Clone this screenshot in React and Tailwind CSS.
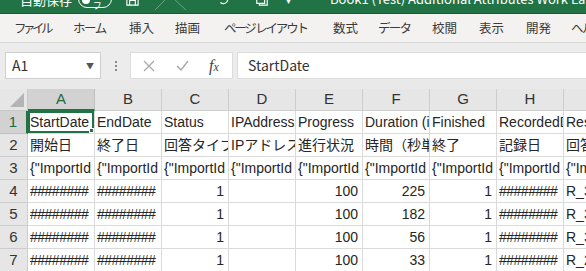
import React from "react";

// ribbon tabs: width of the slot and letter spacing to mimic the proportional UI font
const tabs = [
  { label: "ファイル", w: "w-[59px]", tr: "tracking-[-3.5px]" },
  { label: "ホーム", w: "w-[56px]", tr: "tracking-[-1.5px]" },
  { label: "挿入", w: "w-[46px]", tr: "" },
  { label: "描画", w: "w-[49px]", tr: "" },
  { label: "ページ レイアウト", w: "w-[109px]", tr: "tracking-[-2.2px]" },
  { label: "数式", w: "w-[45px]", tr: "" },
  { label: "データ", w: "w-[54px]", tr: "tracking-[-1.8px]" },
  { label: "校閲", w: "w-[47px]", tr: "" },
  { label: "表示", w: "w-[47px]", tr: "" },
  { label: "開発", w: "w-[45px]", tr: "" },
  { label: "ヘルプ", w: "w-[50px]", tr: "tracking-[-1.5px]" },
];
const cols = ["A", "B", "C", "D", "E", "F", "G", "H", "I"];

const hash = "########";
const imp = '{"ImportId';

const rows = [
  ["StartDate", "EndDate", "Status", "IPAddress", "Progress", "Duration (in seconds)", "Finished", "RecordedDate", "ResponseId"],
  ["開始日", "終了日", "回答タイプ", "IPアドレス", "進行状況", "時間（秒単位）", "終了", "記録日", "回答ID"],
  [imp, imp, imp, imp, imp, imp, imp, imp, imp],
  [hash, hash, "1", "", "100", "225", "1", hash, "R_3xQ"],
  [hash, hash, "1", "", "100", "182", "1", hash, "R_3aB"],
  [hash, hash, "1", "", "100", "56", "1", hash, "R_3kL"],
  [hash, hash, "1", "", "100", "33", "1", hash, "R_2pM"],
];

const isNum = (v) => /^\d+$/.test(v);

export default function App() {
  return (
    <div className="w-[586px] h-[271px] overflow-hidden bg-[#e9e9e9] font-['Noto_Sans_CJK_JP',sans-serif] text-[#262626]">
      {/* title bar, cut off at the top */}
      <div className="h-[14px] bg-[#217346] border-b border-[#195a36] flex items-end overflow-hidden text-white">
        <div className="w-[330px] h-[28px] shrink-0 flex items-center pl-[20px]">
          <span className="text-[13px] leading-none">自動保存</span>
          <span className="ml-[6px] w-[34px] h-[18px] shrink-0 rounded-full border border-white flex items-center px-[3px] text-[9px]">
            <span className="w-[9px] h-[9px] rounded-full bg-white" />
            <span className="ml-[3px]">オフ</span>
          </span>
          <svg className="ml-[13px] shrink-0" width="15" height="15" viewBox="0 0 16 16" fill="none" stroke="white" strokeWidth="1.2">
            <path d="M2 2h10l2 2v10H2z" />
            <path d="M5 2v4h6V2M5 14v-5h6v5" />
          </svg>
          <svg className="ml-[14px] shrink-0" width="34" height="24" viewBox="0 0 34 24" fill="none" stroke="#6a9e80" strokeWidth="1">
            <path d="M1 23L12 12M20 12l12 11" />
          </svg>
          <svg className="ml-[28px] shrink-0" width="14" height="14" viewBox="0 0 16 16" fill="none" stroke="white" strokeWidth="1.3">
            <path d="M4 6a5 5 0 1 1 1 6" />
            <path d="M3 3v4h4" />
          </svg>
          <svg className="ml-[24px] shrink-0" width="16" height="14" viewBox="0 0 16 16" fill="none" stroke="white" strokeWidth="1.3">
            <path d="M2 4h9v9H2zM11 7h3v8H5v-2" />
          </svg>
          <span className="ml-[16px] text-[10px]">▾</span>
        </div>
        <div className="h-[28px] shrink-0 flex items-center">
          <span className="text-[13px] whitespace-nowrap">Book1 (Test) Additional Attributes Work Label Data</span>
        </div>
      </div>

      {/* ribbon tabs */}
      <div className="h-[29px] bg-[#f3f2f1] border-b border-[#d6d6d6] flex items-center pl-[14px] whitespace-nowrap">
        {tabs.map((t) => (
          <span key={t.label} className={`${t.w} ${t.tr} shrink-0 text-[12.5px] text-[#3b3b3b]`}>
            {t.label}
          </span>
        ))}
      </div>

      {/* formula bar */}
      <div className="h-[37px] bg-[#ececec] flex items-end pb-[1px] pl-[5px]">
        <div className="w-[96px] h-[27px] bg-white border border-[#cfcfcf] flex items-center justify-between pl-[6px] pr-[6px]">
          <span className="text-[14px] text-[#333]">A1</span>
          <span className="text-[8px] text-[#555]">▼</span>
        </div>
        <div className="w-[29px] h-[27px] flex flex-col items-center justify-center gap-[2px]">
          <span className="w-[2px] h-[2px] bg-[#8a8a8a]" />
          <span className="w-[2px] h-[2px] bg-[#8a8a8a]" />
          <span className="w-[2px] h-[2px] bg-[#8a8a8a]" />
        </div>
        <div className="w-[103px] h-[27px] bg-white border border-[#dcdcdc] flex items-center">
          <svg className="ml-[12px]" width="12" height="12" viewBox="0 0 12 12" stroke="#a8a8a8" strokeWidth="1.2">
            <path d="M1 1l10 10M11 1L1 11" />
          </svg>
          <svg className="ml-[21px]" width="13" height="11" viewBox="0 0 13 11" fill="none" stroke="#a8a8a8" strokeWidth="1.4">
            <path d="M1 6l4 4 7-9" />
          </svg>
          <span className="ml-[20px] font-['Liberation_Serif',serif] italic text-[16px] text-[#444] leading-none">
            f<span className="text-[12px]">x</span>
          </span>
        </div>
        <div className="ml-[4px] flex-1 h-[27px] bg-white border-y border-l border-[#dcdcdc] flex items-center pl-[10px]">
          <span className="text-[14px] text-[#333]">StartDate</span>
        </div>
      </div>

      {/* grid */}
      <div className="mt-[9px] bg-white grid grid-cols-[28px_repeat(9,67px)] grid-rows-[22px_repeat(7,23px)] font-['Liberation_Sans','Noto_Sans_CJK_JP',sans-serif]">
        <div className="relative bg-[#e6e6e6] border-r border-b border-[#c8c8c8]">
          <div className="absolute right-[3px] bottom-[3px] w-0 h-0 border-l-[14px] border-l-transparent border-b-[14px] border-b-[#b4b4b4]" />
        </div>
        {cols.map((c, i) => (
          <div
            key={c}
            className={
              i === 0
                ? "bg-[#d2d2d2] border-r border-b-2 border-r-[#c0c0c0] border-b-[#217346] flex items-center justify-center text-[15px] text-[#1d6b40]"
                : "bg-[#e6e6e6] border-r border-b border-[#cdcdcd] flex items-center justify-center text-[15px] text-[#333]"
            }
          >
            {c}
          </div>
        ))}
        {rows.map((r, ri) => (
          <React.Fragment key={ri}>
            <div
              className={
                ri === 0
                  ? "bg-[#d2d2d2] border-r-2 border-b border-r-[#217346] border-b-[#c0c0c0] flex items-center justify-center text-[15px] text-[#1d6b40]"
                  : "bg-[#e6e6e6] border-r border-b border-[#cdcdcd] flex items-center justify-center text-[15px] text-[#333]"
              }
            >
              {ri + 1}
            </div>
            {r.map((v, ci) => (
              <div
                key={ci}
                className={
                  "relative overflow-hidden whitespace-nowrap border-r border-b border-[#dadada] flex items-center text-[14px] leading-none px-[2px] " +
                  (isNum(v) ? "justify-end pr-[4px] " : "") +
                  (v === hash ? "tracking-[-0.5px] " : "")
                }
              >
                {v}
                {ri === 0 && ci === 0 && (
                  <>
                    <div className="absolute inset-0 border-2 border-[#217346] pointer-events-none" />
                    <div className="absolute right-0 bottom-0 w-[5px] h-[5px] bg-[#217346] border border-white" />
                  </>
                )}
              </div>
            ))}
          </React.Fragment>
        ))}
      </div>
    </div>
  );
}
